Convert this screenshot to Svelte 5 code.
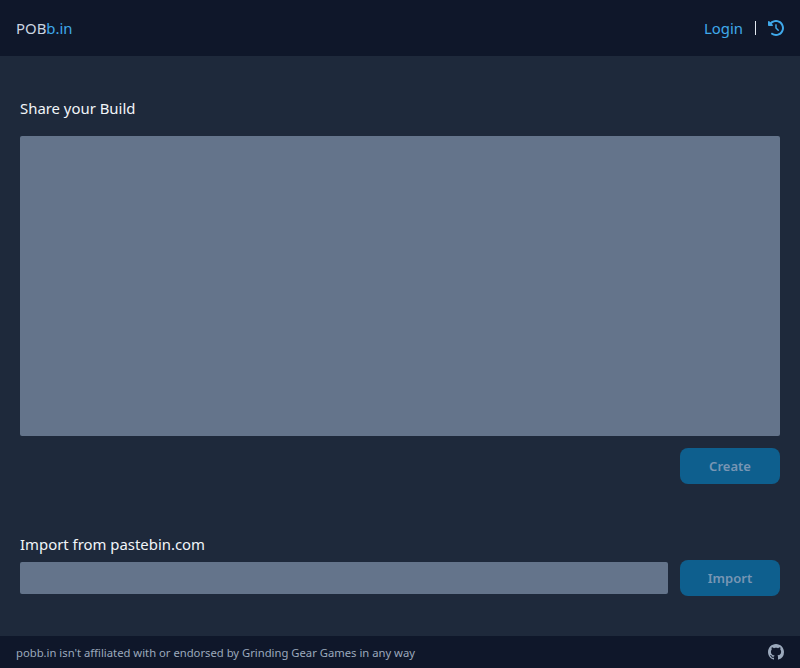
<script>
	let buildCode = $state("");
	let pasteUrl = $state("");
</script>

<div class="page">
	<header>
		<a class="logo" href="/">POB<span>b.in</span></a>
		<nav>
			<a href="/login">Login</a>
			<span class="divider"></span>
			<a class="history" href="/recent" aria-label="Recent builds">
				<svg viewBox="0 0 512 512" width="16" height="16" fill="currentColor">
					<path d="M75 75L41 41C25.9 25.9 0 36.6 0 57.9V168c0 13.3 10.7 24 24 24H134.1c21.4 0 32.1-25.9 17-41l-30.8-30.8C155 85.5 203 64 256 64c106 0 192 86 192 192s-86 192-192 192c-40.8 0-78.6-12.7-109.7-34.4c-14.5-10.1-34.4-6.6-44.6 7.9s-6.6 34.4 7.9 44.6C151.2 495 201.7 512 256 512c141.4 0 256-114.6 256-256S397.4 0 256 0C185.3 0 121.3 28.7 75 75zm181 53c-13.3 0-24 10.7-24 24V256c0 6.4 2.5 12.5 7 17l72 72c9.4 9.4 24.6 9.4 33.9 0s9.4-24.6 0-33.9l-65-65V152c0-13.3-10.7-24-24-24z" />
				</svg>
			</a>
		</nav>
	</header>

	<main>
		<section class="share">
			<h2>Share your Build</h2>
			<textarea bind:value={buildCode}></textarea>
			<div class="actions">
				<button disabled={!buildCode}>Create</button>
			</div>
		</section>

		<section class="import">
			<h2>Import from pastebin.com</h2>
			<div class="import-row">
				<input bind:value={pasteUrl} />
				<button disabled={!pasteUrl}>Import</button>
			</div>
		</section>
	</main>

	<footer>
		<span>pobb.in isn't affiliated with or endorsed by Grinding Gear Games in any way</span>
		<a class="github" href="/github" aria-label="GitHub">
			<svg viewBox="0 0 16 16" width="16" height="16" fill="currentColor">
				<path d="M8 0C3.58 0 0 3.58 0 8c0 3.54 2.29 6.53 5.47 7.59.4.07.55-.17.55-.38 0-.19-.01-.82-.01-1.49-2.01.37-2.53-.49-2.69-.94-.09-.23-.48-.94-.82-1.13-.28-.15-.68-.52-.01-.53.63-.01 1.08.58 1.23.82.72 1.21 1.87.87 2.33.66.07-.52.28-.87.51-1.07-1.78-.2-3.64-.89-3.64-3.95 0-.87.31-1.59.82-2.15-.08-.2-.36-1.02.08-2.12 0 0 .67-.21 2.2.82.64-.18 1.32-.27 2-.27.68 0 1.36.09 2 .27 1.53-1.04 2.2-.82 2.2-.82.44 1.1.16 1.92.08 2.12.51.56.82 1.27.82 2.15 0 3.07-1.87 3.75-3.65 3.95.29.25.54.73.54 1.48 0 1.07-.01 1.93-.01 2.2 0 .21.15.46.55.38A8.013 8.013 0 0016 8c0-4.42-3.58-8-8-8z" />
			</svg>
		</a>
	</footer>
</div>

<style>
	:global(body) {
		margin: 0;
		background: #1e293b;
	}

	.page {
		display: flex;
		flex-direction: column;
		height: 668px;
		font-family: "Noto Sans", "Open Sans", sans-serif;
		color: #f1f5f9;
	}

	a {
		text-decoration: none;
		color: inherit;
	}

	header {
		display: flex;
		align-items: center;
		justify-content: space-between;
		height: 56px;
		padding: 0 16px;
		background: #0f172a;
	}

	.logo {
		font-size: 14.9px;
		color: #cbd5e1;
	}

	.logo span {
		color: #3fa9ea;
	}

	nav {
		display: flex;
		align-items: center;
		gap: 12px;
		color: #3fa9ea;
		font-size: 14.9px;
	}

	.divider {
		width: 1px;
		height: 14px;
		background: #e2e8f0;
	}

	.history,
	.github {
		display: flex;
	}

	main {
		flex: 1;
		display: flex;
		flex-direction: column;
		gap: 48px;
		padding: 40px 20px 0;
	}

	h2 {
		margin: 0;
		font-size: 14.9px;
		font-weight: 400;
		line-height: 24px;
	}

	.share h2 {
		margin-bottom: 16px;
	}

	.import h2 {
		margin-bottom: 4px;
	}

	textarea,
	input {
		display: block;
		box-sizing: border-box;
		border: 0;
		border-radius: 2px;
		background: #64748b;
		color: #f1f5f9;
		padding: 8px;
		margin: 0;
		outline: none;
	}

	textarea {
		width: 100%;
		height: 300px;
		resize: none;
	}

	.actions {
		display: flex;
		justify-content: flex-end;
		margin-top: 12px;
	}

	button {
		width: 100px;
		height: 36px;
		border: 0;
		border-radius: 8px;
		background: #0e5f8e;
		color: #7896b4;
		font-family: inherit;
		font-size: 13px;
		font-weight: 600;
		padding: 0;
	}

	.import-row {
		display: flex;
		align-items: center;
		gap: 12px;
	}

	input {
		flex: 1;
		min-width: 0;
		height: 32px;
	}

	footer {
		display: flex;
		align-items: center;
		justify-content: space-between;
		height: 32px;
		padding: 0 16px;
		background: #0f172a;
		color: #9ba9bc;
		font-size: 11.25px;
	}
</style>
